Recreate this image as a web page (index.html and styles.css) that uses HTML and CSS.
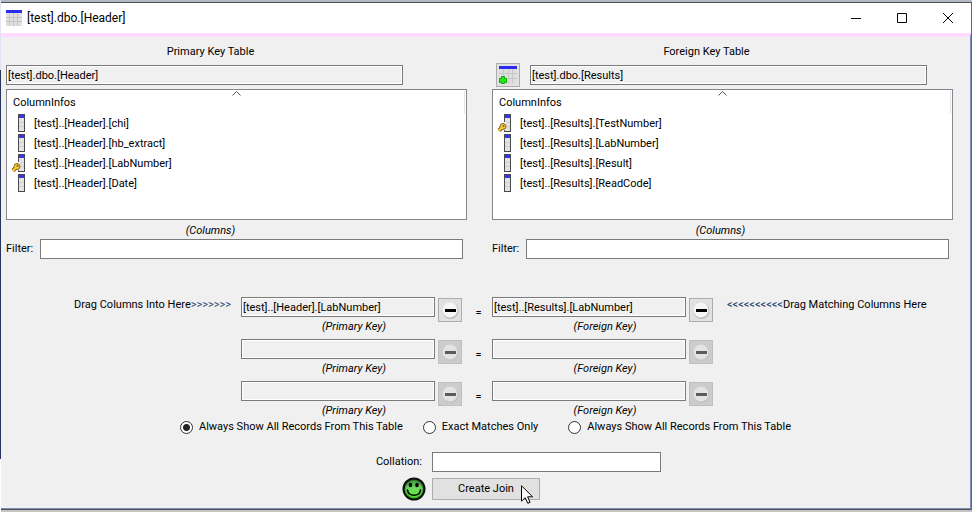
FILE: index.html
```html
<!DOCTYPE html>
<html lang="en">
<head>
<meta charset="utf-8">
<title>[test].dbo.[Header]</title>
<link rel="stylesheet" href="styles.css">
</head>
<body>
<svg class="defs" width="0" height="0" aria-hidden="true">
  <defs>
    <linearGradient id="face" x1="0" y1="0" x2="0" y2="1"><stop offset="0" stop-color="#3c8f3c"/><stop offset=".45" stop-color="#6fd465"/><stop offset="1" stop-color="#4cff1c"/></linearGradient>
    <radialGradient id="rim" cx=".5" cy=".5" r=".5"><stop offset=".7" stop-color="#000" stop-opacity="0"/><stop offset="1" stop-color="#003c00" stop-opacity=".7"/></radialGradient>
    <symbol id="column" viewBox="0 1 20 20">
      <path fill="#4a4a4a" d="M10 1h7v18h-7z"/><path fill="#e2e2e2" d="M11 2h5v16h-5z"/>
      <path fill="#3434f4" d="M11 2h5v3h-5z"/><path fill="#cfcfcf" d="M11 9h5v1h-5zM11 13h5v1h-5z"/>
    </symbol>
    <symbol id="key" viewBox="0 1 20 20">
      <path fill="#fff" d="M3 12l5-3h4v7l-4 3H3z"/>
      <path fill="none" stroke="#8a6410" stroke-width="4" d="M9 13.500l-4 4"/>
      <circle cx="9" cy="13.500" r="3" fill="#f0cc48" stroke="#8a6410"/>
      <path fill="none" stroke="#f0cc48" stroke-width="2" d="M8.500 14l-4 4"/>
      <circle cx="9.500" cy="13" r="1" fill="#8a6410"/>
    </symbol>
    <symbol id="minus" viewBox="0 0 22 22">
      <circle cx="11.500" cy="12" r="8" fill="#bcbcbc"/><circle cx="11" cy="11" r="7.500" fill="#f6f6f6"/>
      <path d="M6 10h11v3H6z"/>
    </symbol>
  </defs>
</svg>
<main class="window">
  <header class="titlebar">
    <svg class="app-icon" viewBox="0 0 16 16" width="16" height="16" aria-hidden="true">
      <path fill="#e0e0e0" d="M0 3h16v13H0z"/><path fill="#2c2cf0" d="M0 0h16v3H0z"/>
      <path stroke="#c6c6c6" d="M0 7.500h16M0 11.500h16M3.500 3v13M7.500 3v13M11.500 3v13"/>
    </svg>
    <h1>[test].dbo.[Header]</h1>
    <button class="caption-button" aria-label="Minimize"><svg viewBox="0 0 10 10"><path d="M0 5.500h10"/></svg></button>
    <button class="caption-button" aria-label="Maximize"><svg viewBox="0 0 10 10"><path d="M.5.5h9v9h-9z"/></svg></button>
    <button class="caption-button" aria-label="Close"><svg viewBox="0 0 10 10"><path d="M0 0l10 10M10 0L0 10"/></svg></button>
  </header>

  <form class="content">
    <div class="tables">
      <section class="panel primary">
        <label class="panel-title" for="pk-table">Primary Key Table</label>
        <div class="table-name"><input class="field readonly" id="pk-table" readonly value="[test].dbo.[Header]"></div>
        <div class="list">
          <table>
            <thead><tr><th>ColumnInfos<svg class="sort" viewBox="0 0 9 5"><path d="M.5 4.500l4-4 4 4"/></svg></th></tr></thead>
            <tbody>
              <tr><td><svg class="row-icon"><use href="#column"/></svg>[test]..[Header].[chi]</td></tr>
              <tr><td><svg class="row-icon"><use href="#column"/></svg>[test]..[Header].[hb_extract]</td></tr>
              <tr><td><svg class="row-icon"><use href="#column"/><use href="#key"/></svg>[test]..[Header].[LabNumber]</td></tr>
              <tr><td><svg class="row-icon"><use href="#column"/></svg>[test]..[Header].[Date]</td></tr>
            </tbody>
          </table>
        </div>
        <p class="hint">(Columns)</p>
        <div class="filter"><label for="pk-filter">Filter:</label><input class="field" id="pk-filter"></div>
      </section>
      <section class="panel foreign">
        <label class="panel-title" for="fk-table">Foreign Key Table</label>
        <div class="table-name">
          <button type="button" class="icon-button" aria-label="Choose table"><svg viewBox="0 0 22 22">
            <path fill="#dedede" d="M2 5h18v15H2z"/><path fill="#2c2cf0" d="M2 2h18v3H2z"/>
            <path fill="none" stroke="#c8c8c8" d="M2 9.500h18M2 14.500h18M6.500 5v15M11.500 5v15M15.500 5v15"/>
            <path fill="#20e810" stroke="#18a010" d="M4.500 12.500h3v2h2v4h-2v1h-3v-1h-2v-4h2z"/>
          </svg></button>
          <input class="field readonly" id="fk-table" readonly value="[test].dbo.[Results]">
        </div>
        <div class="list">
          <table>
            <thead><tr><th>ColumnInfos<svg class="sort" viewBox="0 0 9 5"><path d="M.5 4.500l4-4 4 4"/></svg></th></tr></thead>
            <tbody>
              <tr><td><svg class="row-icon"><use href="#column"/><use href="#key"/></svg>[test]..[Results].[TestNumber]</td></tr>
              <tr><td><svg class="row-icon"><use href="#column"/></svg>[test]..[Results].[LabNumber]</td></tr>
              <tr><td><svg class="row-icon"><use href="#column"/></svg>[test]..[Results].[Result]</td></tr>
              <tr><td><svg class="row-icon"><use href="#column"/></svg>[test]..[Results].[ReadCode]</td></tr>
            </tbody>
          </table>
        </div>
        <p class="hint">(Columns)</p>
        <div class="filter"><label for="fk-filter">Filter:</label><input class="field" id="fk-filter"></div>
      </section>
    </div>

    <div class="keys">
      <div class="key-row">
        <span class="drag from">Drag Columns Into Here<span class="arrows">&gt;&gt;&gt;&gt;&gt;&gt;&gt;</span></span>
        <div class="key"><input class="field readonly" id="pk1" readonly value="[test]..[Header].[LabNumber]"><label for="pk1">(Primary Key)</label></div>
        <button type="button" class="icon-button" aria-label="Clear primary key 1"><svg><use href="#minus"/></svg></button>
        <span class="equals">=</span>
        <div class="key"><input class="field readonly" id="fk1" readonly value="[test]..[Results].[LabNumber]"><label for="fk1">(Foreign Key)</label></div>
        <button type="button" class="icon-button" aria-label="Clear foreign key 1"><svg><use href="#minus"/></svg></button>
        <span class="drag to"><span class="arrows">&lt;&lt;&lt;&lt;&lt;&lt;&lt;&lt;&lt;&lt;</span>Drag Matching Columns Here</span>
      </div>
      <div class="key-row">
        <span class="drag"></span>
        <div class="key"><input class="field readonly" id="pk2" readonly><label for="pk2">(Primary Key)</label></div>
        <button type="button" class="icon-button" disabled aria-label="Clear primary key 2"><svg><use href="#minus"/></svg></button>
        <span class="equals">=</span>
        <div class="key"><input class="field readonly" id="fk2" readonly><label for="fk2">(Foreign Key)</label></div>
        <button type="button" class="icon-button" disabled aria-label="Clear foreign key 2"><svg><use href="#minus"/></svg></button>
        <span class="drag"></span>
      </div>
      <div class="key-row">
        <span class="drag"></span>
        <div class="key"><input class="field readonly" id="pk3" readonly><label for="pk3">(Primary Key)</label></div>
        <button type="button" class="icon-button" disabled aria-label="Clear primary key 3"><svg><use href="#minus"/></svg></button>
        <span class="equals">=</span>
        <div class="key"><input class="field readonly" id="fk3" readonly><label for="fk3">(Foreign Key)</label></div>
        <button type="button" class="icon-button" disabled aria-label="Clear foreign key 3"><svg><use href="#minus"/></svg></button>
        <span class="drag"></span>
      </div>
    </div>

    <div class="join-type">
      <label><input type="radio" name="join" checked>Always Show All Records From This Table</label>
      <label class="exact"><input type="radio" name="join">Exact Matches Only</label>
      <label><input type="radio" name="join">Always Show All Records From This Table</label>
    </div>

    <div class="finish">
      <label for="collation">Collation:</label>
      <input class="field" id="collation">
      <svg class="smiley" viewBox="0 0 24 24" aria-hidden="true">
        <circle cx="12" cy="12" r="10.500" fill="url(#face)"/><circle cx="12" cy="12" r="10.500" fill="url(#rim)" stroke="#0a120a" stroke-width="2"/>
        <ellipse cx="8.500" cy="8" rx="1.800" ry="2.300"/><ellipse cx="15" cy="8" rx="1.800" ry="2.300"/>
        <path fill="none" stroke="#000" stroke-width="1.600" stroke-linecap="round" d="M5.500 13c1 7 12 7 13 0"/>
      </svg>
      <button type="button" class="create">Create Join
        <svg class="cursor" viewBox="0 0 12 19" aria-hidden="true"><path fill="#fff" stroke="#000" d="M.5.8v15.400l3.700-3.500 2.600 5.600 2.300-1-2.500-5.500h5z"/></svg>
      </button>
    </div>
  </form>
</main>
</body>
</html>
```
FILE: styles.css
```css
* { box-sizing: border-box; }

body {
  margin: 0;
  padding: 2px 1px 0;
  min-height: 100vh;
  font: 11px/16px Roboto, "Liberation Sans", sans-serif;
  color: #000;
  background:
    linear-gradient(#dfe5f2 70px, #26355c 70px, #26355c 459px, #fff 459px) 0 0 / 1px 100% no-repeat,
    linear-gradient(#b4b9c8 2px, #c4c6c6 2px);
}

.defs { position: absolute; }

.window {
  border: solid #505050;
  border-width: 1px 0 1px;
  box-shadow: 1px 0 #606878;
  background: #f0f0f0;
}

.titlebar {
  display: flex;
  align-items: center;
  height: 30px;
  padding-left: 5px;
  background: #fff;
}
.titlebar h1 {
  flex: 1;
  margin: 0 0 0 5px;
  font-weight: normal;
  font-size: 12px;
}
.caption-button {
  width: 46px;
  height: 30px;
  padding: 0;
  border: 0;
  background: none;
}
.caption-button svg {
  display: block;
  width: 10px;
  height: 10px;
  margin: auto;
  fill: none;
  stroke: #000;
  overflow: visible;
}

.content {
  border-top: 4px solid #ffdcff;
  border-right: 1px solid #7d8fb8;
  border-bottom: 1px solid #7d8fb8;
  padding-bottom: 7px;
}

.tables {
  display: grid;
  grid-template-columns: 1fr 1fr;
  gap: 25px;
  padding: 7px 17px 0 5px;
}
.panel {
  display: flex;
  flex-direction: column;
}
.panel-title { text-align: center; }
.primary .panel-title,
.primary .hint { padding-right: 52px; }
.foreign .panel-title { padding-right: 32px; }

.field {
  flex: 1;
  width: 100%;
  min-width: 0;
  height: 20px;
  padding: 0 1px;
  border: 1px solid #7a7a7a;
  background: #fff;
  font: inherit;
  color: inherit;
}
.readonly {
  background: #f0f0f0;
  box-shadow: inset 0 0 0 1px #fff;
}

.table-name {
  display: flex;
  align-items: center;
  height: 24px;
  margin: 3px 0 2px;
}
.primary .table-name { padding-right: 64px; }
.foreign .table-name {
  gap: 10px;
  padding: 0 26px 0 4px;
}

.icon-button {
  flex: none;
  width: 24px;
  height: 24px;
  padding: 0;
  border: 1px solid #adadad;
  background: #e1e1e1;
}
.icon-button svg {
  display: block;
  width: 22px;
  height: 22px;
}
.icon-button:disabled {
  border-color: #bfbfbf;
  background: #ccc;
}
.icon-button:disabled svg { opacity: .55; }

.list {
  min-height: 131px;
  border: 1px solid #828790;
  background: #fff;
}
.list table {
  width: 100%;
  border-collapse: collapse;
}
.list th {
  position: relative;
  height: 24px;
  padding: 2px 6px 0;
  font-weight: normal;
  text-align: left;
  background: linear-gradient(#e5e5e5, #e5e5e5) right 1px top 1px / 1px 100% no-repeat;
}
.sort {
  position: absolute;
  top: 1px;
  left: 50%;
  width: 9px;
  height: 5px;
  margin-left: -5px;
  fill: none;
  stroke: #555;
}
.list td {
  height: 20px;
  padding: 0 0 0 1px;
}
.row-icon {
  width: 20px;
  height: 20px;
  margin-right: 6px;
  vertical-align: middle;
  overflow: visible;
}

.hint {
  margin: 3px 0 0;
  text-align: center;
  font-style: italic;
}
.foreign .hint { padding-right: 4px; }
.filter {
  display: flex;
  align-items: center;
  padding-right: 4px;
}
.filter label { width: 34px; }

.keys {
  display: grid;
  row-gap: 4px;
  padding-top: 38px;
}
.key-row {
  display: grid;
  grid-template-columns: 1fr 194px 24px 24px 194px 24px 1fr;
  column-gap: 3px;
  padding-right: 17px;
}
.key {
  display: flex;
  flex-direction: column;
}
.key .field { flex: none; }
.key label {
  margin: 2px 0 0 32px;
  text-align: center;
  font-style: italic;
}
.key-row .icon-button { margin-top: 1px; }
.equals {
  padding: 8px 0 0 3px;
  text-align: center;
}
.drag { white-space: nowrap; }
.from {
  padding-right: 7px;
  text-align: right;
}
.to { padding-left: 11px; }
.arrows { color: #1d4370; }

.join-type {
  display: flex;
  justify-content: center;
  gap: 20px;
}
.join-type label {
  display: flex;
  align-items: center;
  gap: 6px;
}
.join-type .exact { padding-right: 10px; }
.join-type input {
  appearance: none;
  width: 13px;
  height: 13px;
  margin: 0;
  border: 1px solid #333;
  border-radius: 50%;
  background: #fff;
}
.join-type input:checked {
  background: radial-gradient(circle, #222 3px, #fff 4px);
}

.finish {
  display: grid;
  grid-template-columns: 1fr 229px 1fr;
  column-gap: 6px;
  row-gap: 5px;
  align-items: center;
  padding: 17px 0 0 122px;
}
.finish label {
  grid-column: 1;
  padding-right: 4px;
  text-align: right;
}
.finish .field { grid-column: 2; }
.smiley {
  grid-column: 1;
  justify-self: end;
  width: 24px;
  height: 24px;
}
.create {
  position: relative;
  grid-column: 2;
  width: 108px;
  height: 22px;
  padding: 0;
  border: 1px solid #adadad;
  background: #e1e1e1;
  font: inherit;
}
.cursor {
  position: absolute;
  top: 6px;
  left: 88px;
  width: 12px;
  height: 19px;
}
```
